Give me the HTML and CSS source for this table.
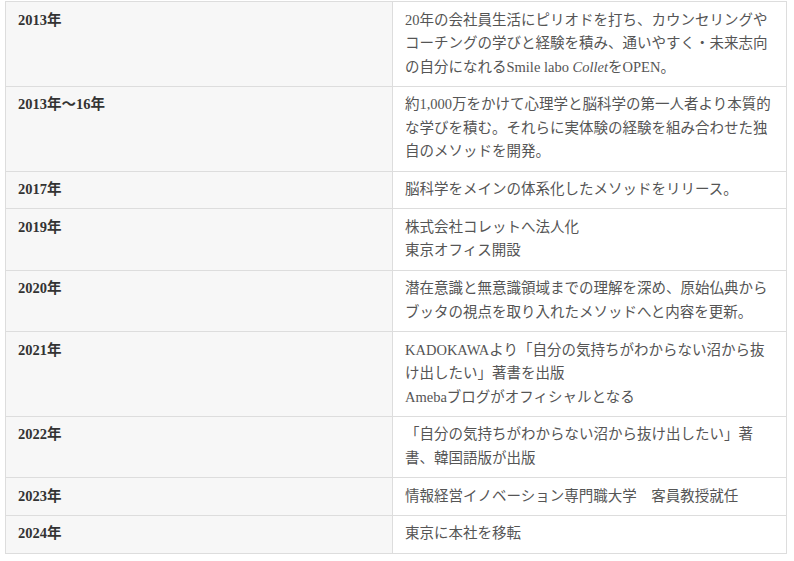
FILE: index.html
```html
<!DOCTYPE html>
<html lang="ja">
<head>
<meta charset="utf-8">
<link rel="stylesheet" href="styles.css">
</head>
<body>
<table class="history">
  <tr><th>2013年</th><td>20年の会社員生活にピリオドを打ち、カウンセリングや<br>コーチングの学びと経験を積み、通いやすく・未来志向<br>の自分になれるSmile labo <em>Collet</em>をOPEN。</td></tr>
  <tr><th>2013年〜16年</th><td>約1,000万をかけて心理学と脳科学の第一人者より本質的<br>な学びを積む。それらに実体験の経験を組み合わせた独<br>自のメソッドを開発。</td></tr>
  <tr><th>2017年</th><td>脳科学をメインの体系化したメソッドをリリース。</td></tr>
  <tr><th>2019年</th><td>株式会社コレットへ法人化<br>東京オフィス開設</td></tr>
  <tr><th>2020年</th><td>潜在意識と無意識領域までの理解を深め、原始仏典から<br>ブッタの視点を取り入れたメソッドへと内容を更新。</td></tr>
  <tr><th>2021年</th><td>KADOKAWAより「自分の気持ちがわからない沼から抜<br>け出したい」著書を出版<br>Amebaブログがオフィシャルとなる</td></tr>
  <tr><th>2022年</th><td>「自分の気持ちがわからない沼から抜け出したい」著<br>書、韓国語版が出版</td></tr>
  <tr><th>2023年</th><td>情報経営イノベーション専門職大学　客員教授就任</td></tr>
  <tr><th>2024年</th><td>東京に本社を移転</td></tr>
</table>
</body>
</html>
```
FILE: styles.css
```css
html, body {
  margin: 0;
  padding: 0;
  background: #ffffff;
}
body {
  padding: 1px 7px 0 5px;
  font-family: "Liberation Serif", "Noto Sans CJK JP", serif;
  font-size: 14.5px;
  line-height: 23.5px;
}
.history {
  width: 782px;
  border-collapse: collapse;
  table-layout: fixed;
}
.history th,
.history td {
  border: 1px solid #dddddd;
  padding: 6.65px 12px;
  text-align: left;
  vertical-align: top;
  white-space: nowrap;
}
.history th {
  width: 362px;
  background: #f7f7f7;
  color: #333333;
  font-weight: bold;
}
.history td {
  color: #555555;
  font-weight: normal;
}
.history em {
  font-style: italic;
}
```
